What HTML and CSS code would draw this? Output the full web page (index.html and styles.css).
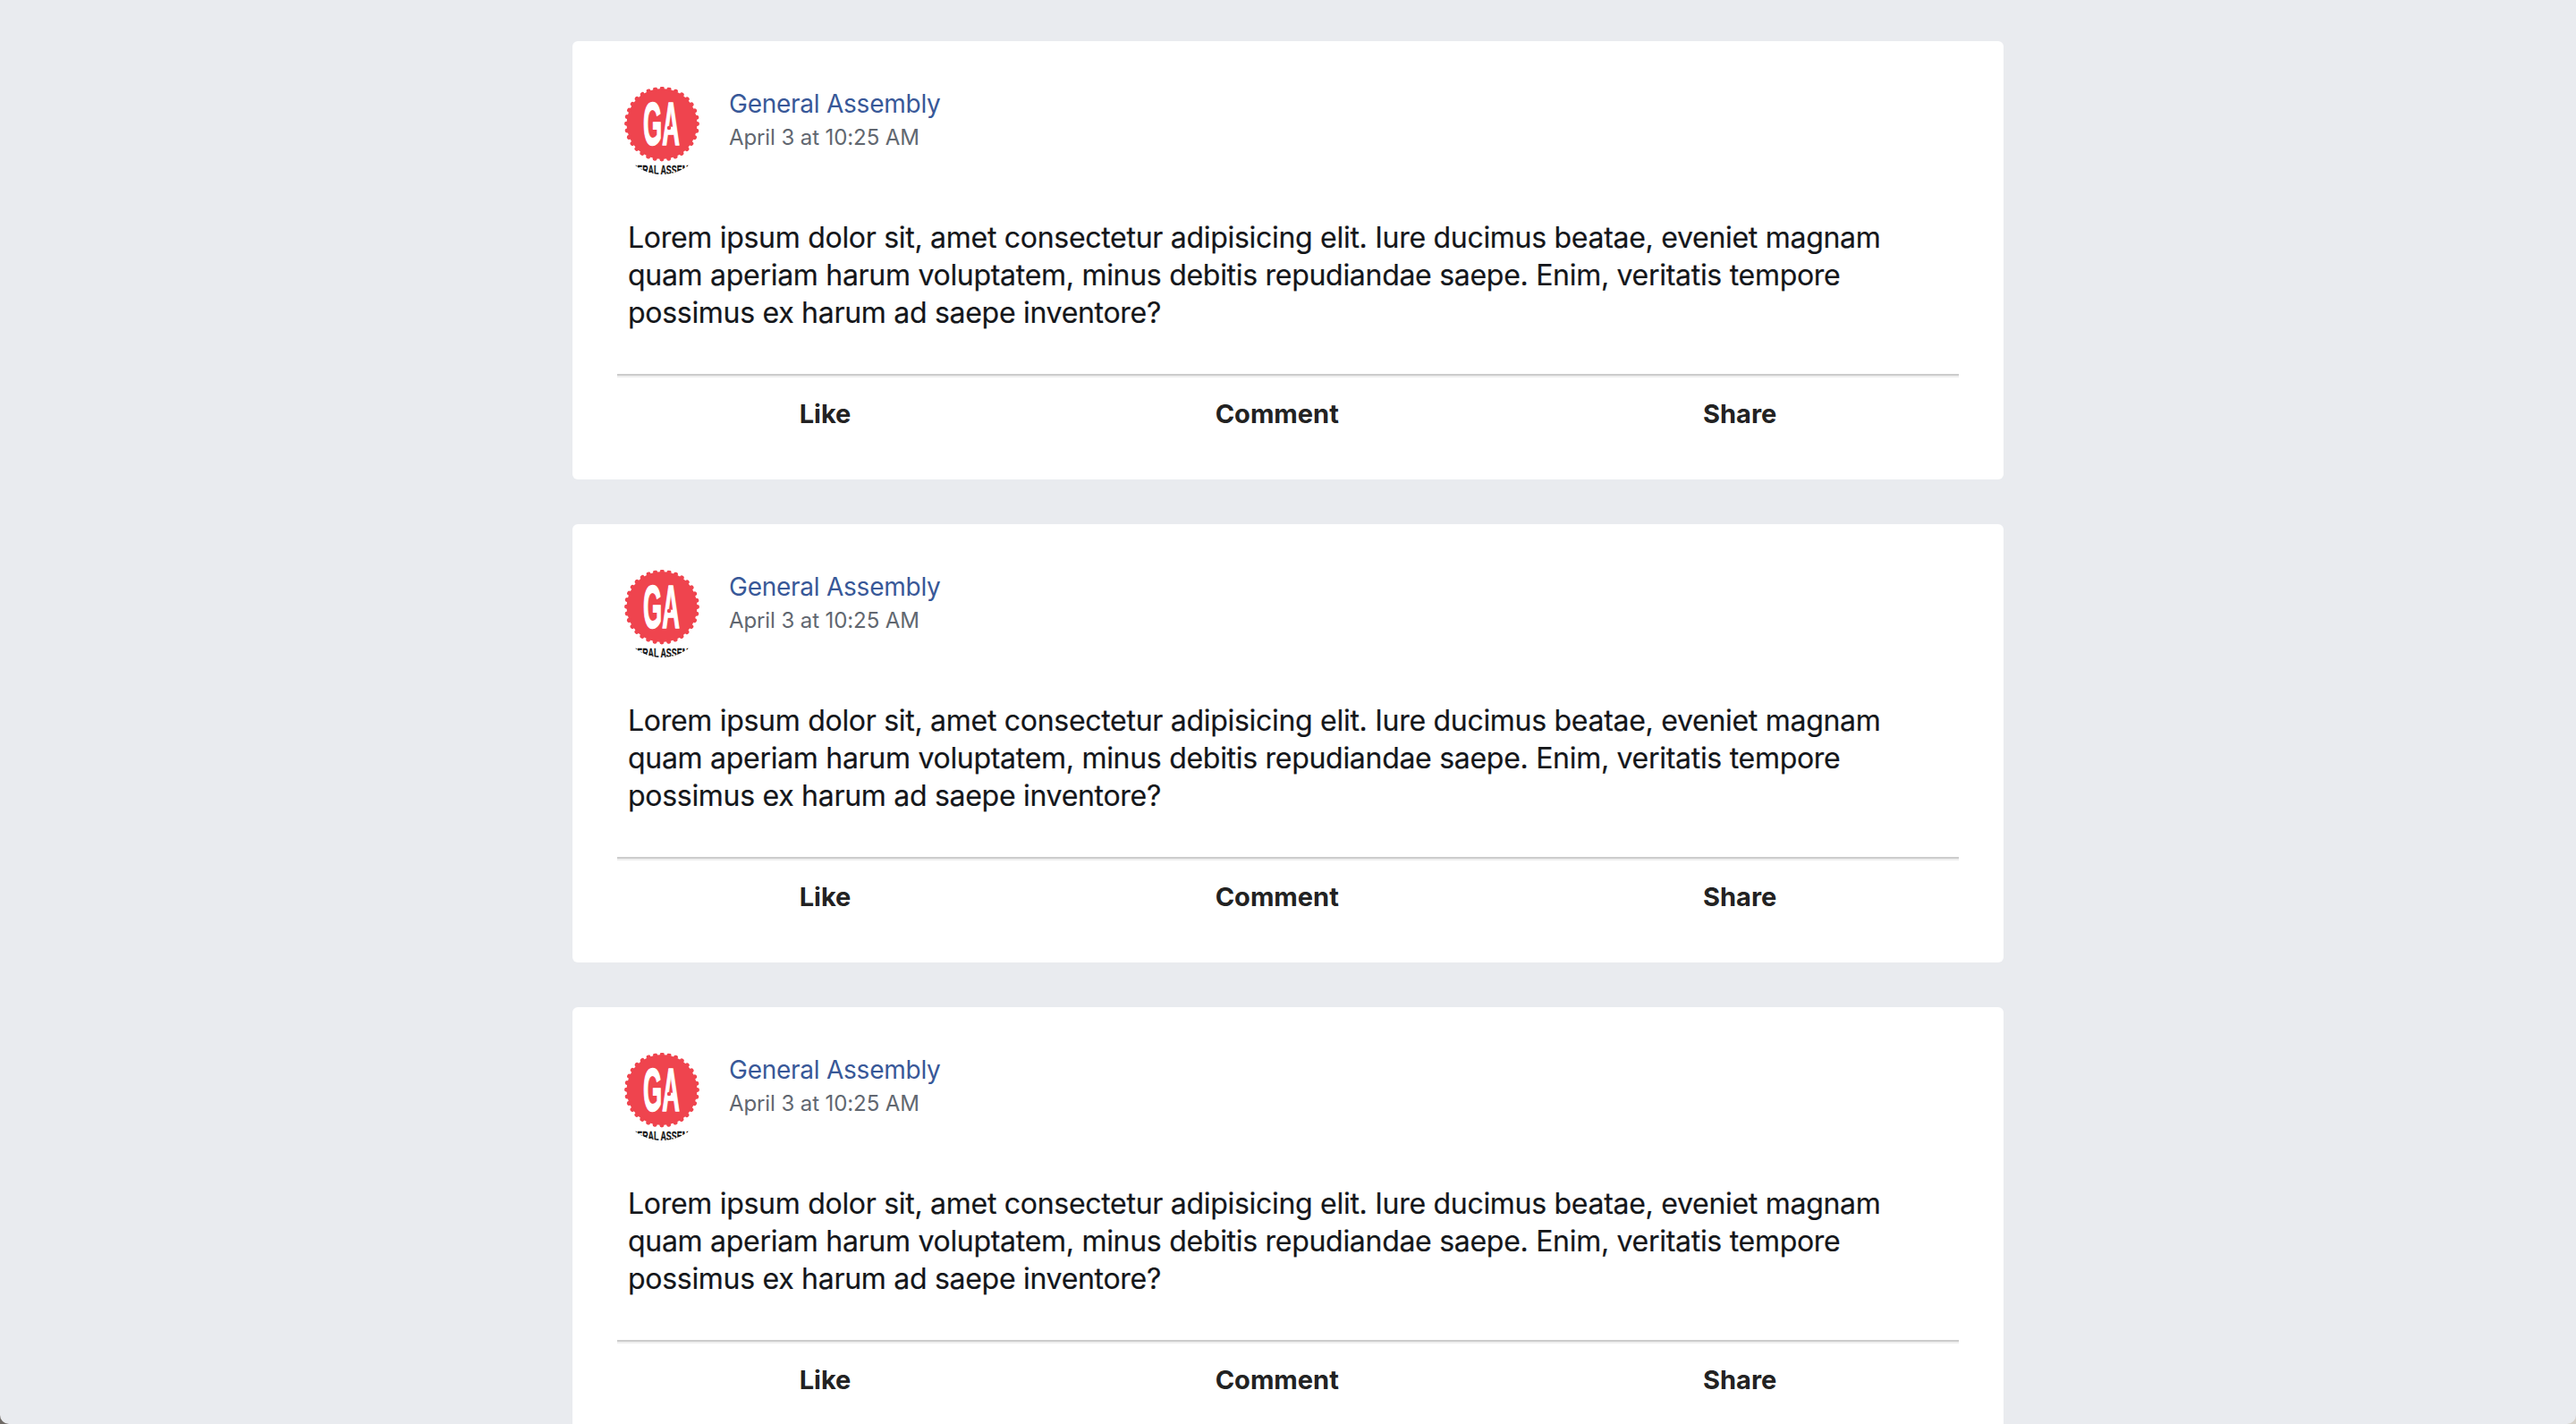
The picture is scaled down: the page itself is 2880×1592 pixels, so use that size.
FILE: index.html
```html
<!DOCTYPE html>
<html lang="en">
<head>
  <meta charset="UTF-8">
  <title>Posts</title>
  <link rel="stylesheet" href="styles.css">
</head>
<body>

  <div class="feed">
    <div class="post">
      <div class="post-header">
        <div class="avatar">
          <svg viewBox="0 0 98 98" width="98" height="98">
            <circle cx="49" cy="41.5" r="39.5" fill="#ef444e"/>
            <circle cx="49" cy="41.5" r="39.5" fill="none" stroke="#ef444e" stroke-width="5" stroke-linecap="round" stroke-dasharray="0.01 7.746"/>
            <text class="logo-ga" transform="translate(48.5 64.5) scale(0.4 1)">GA</text>
            <circle cx="57" cy="46" r="2.2" fill="#ef444e"/>
            <text x="49" y="98" class="logo-name" textLength="94" lengthAdjust="spacingAndGlyphs">GENERAL ASSEMBLY</text>
          </svg>
        </div>
        <div class="post-meta">
          <a class="post-author">General Assembly</a>
          <div class="post-date">April 3 at 10:25 AM</div>
        </div>
      </div>
      <p class="post-text">Lorem ipsum dolor sit, amet consectetur adipisicing elit. Iure ducimus beatae, eveniet magnam quam aperiam harum voluptatem, minus debitis repudiandae saepe. Enim, veritatis tempore possimus ex harum ad saepe inventore?</p>
      <hr class="divider">
      <div class="post-actions">
        <div class="action">Like</div>
        <div class="action">Comment</div>
        <div class="action">Share</div>
      </div>
    </div>

    <div class="post">
      <div class="post-header">
        <div class="avatar">
          <svg viewBox="0 0 98 98" width="98" height="98">
            <circle cx="49" cy="41.5" r="39.5" fill="#ef444e"/>
            <circle cx="49" cy="41.5" r="39.5" fill="none" stroke="#ef444e" stroke-width="5" stroke-linecap="round" stroke-dasharray="0.01 7.746"/>
            <text class="logo-ga" transform="translate(48.5 64.5) scale(0.4 1)">GA</text>
            <circle cx="57" cy="46" r="2.2" fill="#ef444e"/>
            <text x="49" y="98" class="logo-name" textLength="94" lengthAdjust="spacingAndGlyphs">GENERAL ASSEMBLY</text>
          </svg>
        </div>
        <div class="post-meta">
          <a class="post-author">General Assembly</a>
          <div class="post-date">April 3 at 10:25 AM</div>
        </div>
      </div>
      <p class="post-text">Lorem ipsum dolor sit, amet consectetur adipisicing elit. Iure ducimus beatae, eveniet magnam quam aperiam harum voluptatem, minus debitis repudiandae saepe. Enim, veritatis tempore possimus ex harum ad saepe inventore?</p>
      <hr class="divider">
      <div class="post-actions">
        <div class="action">Like</div>
        <div class="action">Comment</div>
        <div class="action">Share</div>
      </div>
    </div>

    <div class="post">
      <div class="post-header">
        <div class="avatar">
          <svg viewBox="0 0 98 98" width="98" height="98">
            <circle cx="49" cy="41.5" r="39.5" fill="#ef444e"/>
            <circle cx="49" cy="41.5" r="39.5" fill="none" stroke="#ef444e" stroke-width="5" stroke-linecap="round" stroke-dasharray="0.01 7.746"/>
            <text class="logo-ga" transform="translate(48.5 64.5) scale(0.4 1)">GA</text>
            <circle cx="57" cy="46" r="2.2" fill="#ef444e"/>
            <text x="49" y="98" class="logo-name" textLength="94" lengthAdjust="spacingAndGlyphs">GENERAL ASSEMBLY</text>
          </svg>
        </div>
        <div class="post-meta">
          <a class="post-author">General Assembly</a>
          <div class="post-date">April 3 at 10:25 AM</div>
        </div>
      </div>
      <p class="post-text">Lorem ipsum dolor sit, amet consectetur adipisicing elit. Iure ducimus beatae, eveniet magnam quam aperiam harum voluptatem, minus debitis repudiandae saepe. Enim, veritatis tempore possimus ex harum ad saepe inventore?</p>
      <hr class="divider">
      <div class="post-actions">
        <div class="action">Like</div>
        <div class="action">Comment</div>
        <div class="action">Share</div>
      </div>
    </div>
  </div>

</body>
</html>
```

FILE: styles.css
```css
* {
  margin: 0;
  padding: 0;
  box-sizing: border-box;
  font-family: Inter, 'Liberation Sans', sans-serif;
}

html {
  height: 100%;
  background: linear-gradient(to right, #6f6a66 50%, #d5d0c8 50%);
  overflow: hidden;
}

body {
  height: 1592px;
  background: #e9ebef;
  border-radius: 0 0 10px 10px;
  overflow: hidden;
}

.feed {
  width: 1600px;
  margin: 0 auto;
  padding-top: 46px;
  display: flex;
  flex-direction: column;
  gap: 50px;
}

.post {
  height: 490px;
  flex-shrink: 0;
  background: #fff;
  border-radius: 6px;
  padding: 51px 50px 0;
}

.post-header {
  display: flex;
  padding-left: 1px;
}

.avatar {
  width: 98px;
  height: 98px;
  border-radius: 50%;
  overflow: hidden;
  margin-right: 26px;
}

.avatar svg {
  display: block;
}

.logo-ga {
  font-family: 'Liberation Sans', sans-serif;
  font-size: 68px;
  font-weight: bold;
  fill: #fff;
  stroke: #fff;
  stroke-width: 1.6px;
  text-anchor: middle;
}

.logo-name {
  font-family: 'Liberation Sans', sans-serif;
  font-size: 14px;
  font-weight: bold;
  fill: #111;
  stroke: #111;
  stroke-width: 0.3px;
  text-anchor: middle;
}

.post-author {
  display: block;
  font-size: 28px;
  line-height: 39px;
  letter-spacing: -0.25px;
  color: #385898;
}

.post-date {
  padding-top: 1px;
  font-size: 24px;
  line-height: 34px;
  letter-spacing: -0.1px;
  color: #616770;
}

.post-text {
  margin-top: 50px;
  padding-left: 12px;
  font-size: 32px;
  line-height: 42px;
  letter-spacing: -0.29px;
  color: #14161a;
  -webkit-text-stroke: 0.2px #14161a;
}

.divider {
  margin-top: 47px;
  border: none;
  border-top: 2px solid #ccc;
  border-bottom: 2px solid #eee;
}

.post-actions {
  display: flex;
  justify-content: space-around;
  padding-top: 21px;
  font-size: 29px;
  font-weight: 700;
  line-height: 40px;
  color: #222;
}
```
